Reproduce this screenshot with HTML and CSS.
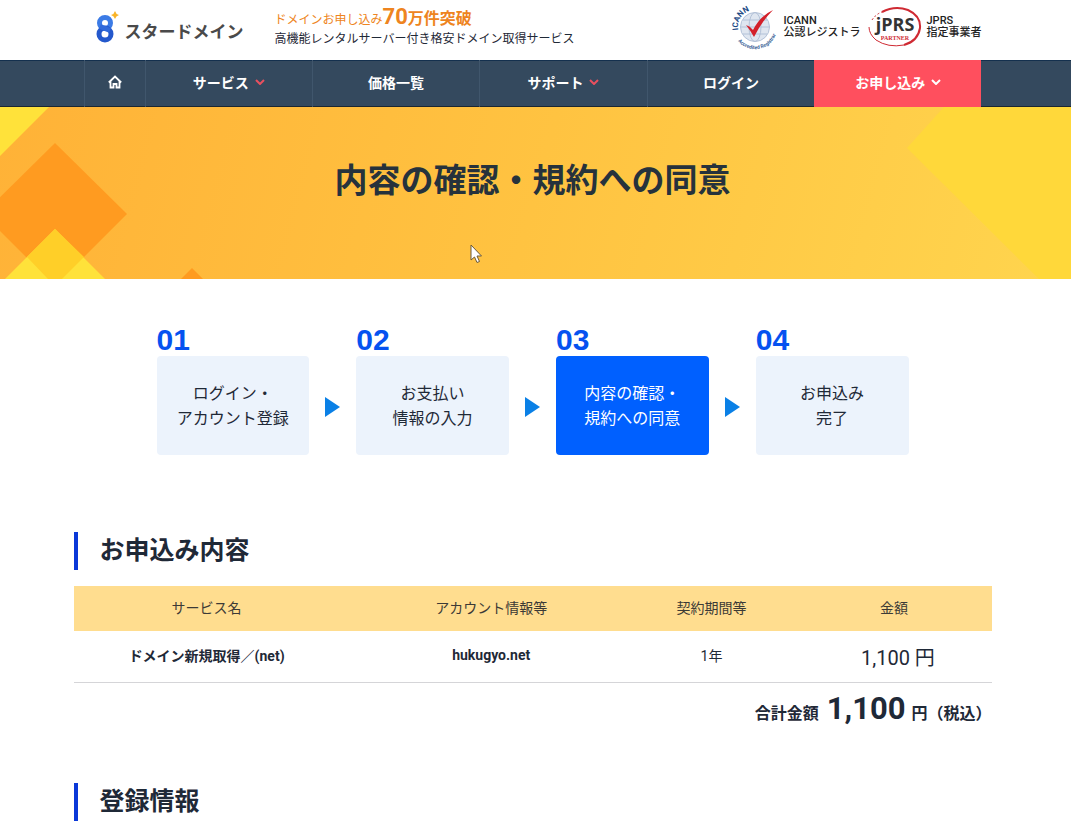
FILE: index.html
```html
<!DOCTYPE html>
<html lang="ja">
<head>
    <meta charset="UTF-8">
    <meta name="viewport" content="width=device-width, initial-scale=1.0">
    <title>内容の確認・規約への同意 | スタードメイン</title>
    <link rel="stylesheet" href="styles.css">
</head>
<body>

    <header class="header">
        <div class="header-inner">
            <a href="#" class="logo">
                <svg class="logo-mark" width="26" height="34" viewBox="0 0 26 34" aria-hidden="true">
                    <circle cx="10" cy="12" r="5.5" fill="none" stroke="#3b7be6" stroke-width="5"/>
                    <circle cx="10" cy="23" r="6" fill="none" stroke="#2458cc" stroke-width="5"/>
                    <path d="M5 15.5 L15 19.5" stroke="#3069da" stroke-width="5"/>
                    <path d="M20 0 Q20.8 3.2 24 4 Q20.8 4.8 20 8 Q19.2 4.8 16 4 Q19.2 3.2 20 0Z" fill="#f9b428"/>
                </svg>
                <span class="logo-text">スタードメイン</span>
            </a>
            <div class="catch">
                <p class="catch-main">ドメインお申し込み<strong class="catch-num">70</strong><strong class="catch-unit">万件突破</strong></p>
                <p class="catch-sub">高機能レンタルサーバー付き格安ドメイン取得サービス</p>
            </div>
            <div class="badges">
                <div class="badge">
                    <svg width="48" height="48" viewBox="0 0 48 48" aria-hidden="true">
                        <defs>
                            <path id="icannTop" d="M7.2 27 A17 17 0 0 1 35 11"/>
                            <path id="icannBottom" d="M7 38 A22 22 0 0 0 46 22"/>
                        </defs>
                        <circle cx="24" cy="24" r="14.5" fill="#dfe6f0"/>
                        <g fill="none" stroke="#b3c2d8">
                            <circle cx="24" cy="24" r="14.5"/>
                            <ellipse cx="24" cy="24" rx="6" ry="14.5"/>
                            <path d="M9.5 24H38.5M12 17H36M12 31H36"/>
                        </g>
                        <text class="icann-name"><textPath href="#icannTop">ICANN</textPath></text>
                        <text class="icann-note"><textPath href="#icannBottom">Accredited Registrar</textPath></text>
                        <path d="M15 22 Q19 23 22 27 Q29 13 42 7 Q31 18 23 34 Q19 27 15 22Z" fill="#d3202a"/>
                    </svg>
                    <p class="badge-text">ICANN<br>公認レジストラ</p>
                </div>
                <div class="badge">
                    <svg width="54" height="42" viewBox="0 0 54 42" aria-hidden="true">
                        <g fill="none" stroke="#cf2a33">
                            <path d="M14 6 Q27 -1 40 4 Q53 10 52 22 Q50 35 36 39" stroke-width="2"/>
                            <path d="M36 39 Q20 42 8 34 Q1 28 1 21" stroke-width="1"/>
                            <path d="M4 14 Q8 8 14 6" stroke-width="1" stroke-dasharray="2 2"/>
                        </g>
                        <text class="jprs-name" x="27" y="25" text-anchor="middle">jPRS</text>
                        <text class="jprs-note" x="27" y="34" text-anchor="middle">PARTNER</text>
                    </svg>
                    <p class="badge-text">JPRS<br>指定事業者</p>
                </div>
            </div>
        </div>
    </header>

    <nav class="nav">
        <ul class="nav-list">
            <li>
                <a href="#" aria-label="ホーム">
                    <svg width="14" height="14" viewBox="0 0 14 14" aria-hidden="true">
                        <path d="M0.8 7.5 L7 1.5 L13.2 7.5 M2.5 6.5 V12.5 H5.5 V9 H8.5 V12.5 H11.5 V6.5" fill="none" stroke="#fff" stroke-width="1.8"/>
                    </svg>
                </a>
            </li>
            <li>
                <a href="#">サービス
                    <svg class="chevron" width="10" height="6" viewBox="0 0 10 6" aria-hidden="true"><path d="M1 1 L5 5 L9 1"/></svg>
                </a>
            </li>
            <li><a href="#">価格一覧</a></li>
            <li>
                <a href="#">サポート
                    <svg class="chevron" width="10" height="6" viewBox="0 0 10 6" aria-hidden="true"><path d="M1 1 L5 5 L9 1"/></svg>
                </a>
            </li>
            <li><a href="#">ログイン</a></li>
            <li class="nav-apply">
                <a href="#">お申し込み
                    <svg class="chevron" width="10" height="6" viewBox="0 0 10 6" aria-hidden="true"><path d="M1 1 L5 5 L9 1"/></svg>
                </a>
            </li>
        </ul>
    </nav>

    <div class="hero">
        <svg class="hero-left" width="210" height="172" viewBox="0 0 210 172" aria-hidden="true">
            <path d="M0 0H49L0 49Z" fill="#ffe23a"/>
            <path d="M55 36L127 107L55 179L-17 107Z" fill="#ff9b20"/>
            <path d="M55 122L105 172H5Z" fill="#ffe23a"/>
            <path d="M55 122L84 150L62 172H48L27 150Z" fill="#ffcf28"/>
            <path d="M192 161L203 172H181Z" fill="#ff9b20"/>
        </svg>
        <svg class="hero-right" width="164" height="172" viewBox="0 0 164 172" aria-hidden="true">
            <path d="M37 0H164V172H132L0 41Z" fill="#ffd83a"/>
        </svg>
        <h1>内容の確認・規約への同意</h1>
        <svg class="cursor" width="14" height="20" viewBox="0 0 14 20" aria-hidden="true">
            <path d="M1 1V16L4.5 13L7 18.5L9.5 17.5L7 12H11.5Z" fill="#fff" stroke="#6b5a3a"/>
        </svg>
    </div>

    <main class="main">
        <ol class="steps">
            <li class="step">
                <span class="step-num">01</span>
                <p class="step-box">ログイン・<br>アカウント登録</p>
            </li>
            <li class="step">
                <span class="step-num">02</span>
                <p class="step-box">お支払い<br>情報の入力</p>
            </li>
            <li class="step current">
                <span class="step-num">03</span>
                <p class="step-box">内容の確認・<br>規約への同意</p>
            </li>
            <li class="step">
                <span class="step-num">04</span>
                <p class="step-box">お申込み<br>完了</p>
            </li>
        </ol>

        <section class="section">
            <h2>お申込み内容</h2>
            <table class="order">
                <thead>
                    <tr>
                        <th>サービス名</th>
                        <th>アカウント情報等</th>
                        <th>契約期間等</th>
                        <th>金額</th>
                    </tr>
                </thead>
                <tbody>
                    <tr>
                        <td class="strong">ドメイン新規取得／(net)</td>
                        <td class="strong">hukugyo.net</td>
                        <td>1年</td>
                        <td class="price">1,100 円</td>
                    </tr>
                </tbody>
            </table>
            <p class="total">合計金額 <span class="total-num">1,100</span> 円（税込）</p>
        </section>

        <section class="section">
            <h2>登録情報</h2>
        </section>
    </main>

</body>
</html>
```

FILE: styles.css
```css
* {
    box-sizing: border-box;
}

body {
    margin: 0;
    font-family: Roboto, "Noto Sans CJK JP", sans-serif;
    font-size: 14px;
    color: #1f2937;
    background-color: #fff;
}

h1, h2, p, ul, ol {
    margin: 0;
    padding: 0;
}

ul, ol {
    list-style: none;
}

a {
    color: inherit;
    text-decoration: none;
}

.header,
.nav,
.hero,
.main {
    padding-right: 6px;
}

/* header */
.header-inner {
    display: flex;
    align-items: center;
    max-width: 898px;
    height: 60px;
    margin: 0 auto;
    padding-left: 11px;
}

.logo {
    display: flex;
    align-items: center;
    gap: 4px;
    margin-right: 31px;
}

.logo-mark {
    margin-bottom: 4px;
}

.logo-text {
    font-size: 17px;
    font-weight: bold;
    color: #4a4a4a;
}

.catch {
    font-size: 12px;
    line-height: 16px;
    padding-bottom: 8px;
}

.catch-main {
    line-height: 22px;
    color: #ee8420;
}

.catch-num {
    font-size: 22px;
}

.catch-unit {
    font-size: 16px;
}

.badges {
    display: flex;
    gap: 7px;
    margin-left: auto;
    padding-bottom: 6px;
}

.badge {
    display: flex;
    align-items: center;
    gap: 5px;
}

.badge-text {
    font-size: 11px;
    font-weight: 500;
    line-height: 12px;
    color: #222;
}

.icann-name {
    font: bold 8px Roboto, sans-serif;
    fill: #1d4a85;
}

.icann-note {
    font: bold 5px Roboto, sans-serif;
    fill: #3a6296;
}

.jprs-name {
    font: bold 18px "Open Sans", sans-serif;
    fill: #333;
}

.jprs-note {
    font: bold 6px "Liberation Serif", serif;
    fill: #cf2a33;
}

/* nav */
.nav {
    background-color: #34495e;
    box-shadow: inset 0 1px #14304e, inset 0 -1px #1b2732;
}

.nav-list {
    display: grid;
    grid-template-columns: 61px repeat(5, 1fr);
    max-width: 898px;
    margin: 0 auto;
}

.nav-list li {
    border-left: 1px solid #40566c;
}

.nav-list a {
    display: flex;
    justify-content: center;
    align-items: center;
    gap: 6px;
    height: 47px;
    padding-bottom: 4px;
    font-weight: bold;
    color: #fff;
}

.chevron path {
    fill: none;
    stroke: #e8505f;
    stroke-width: 2;
}

.nav-list .nav-apply {
    background-color: #ff4f5e;
    border-left-color: #ff4f5e;
}

.nav-apply .chevron path {
    stroke: #fff;
}

/* hero */
.hero {
    position: relative;
    height: 172px;
    padding-top: 50px;
    background: linear-gradient(105deg, #ffb237, #ffc341 50%, #ffd54e);
    text-align: center;
}

.hero h1 {
    position: relative;
    font-size: 33px;
    line-height: 48px;
    color: #26323c;
}

.hero-left,
.hero-right {
    position: absolute;
    top: 0;
}

.hero-left {
    left: 0;
}

.hero-right {
    right: 0;
}

.cursor {
    position: absolute;
    top: 137px;
    left: 470px;
}

/* steps */
.steps {
    display: grid;
    grid-template-columns: repeat(4, 1fr);
    gap: 47px;
    max-width: 752px;
    margin: 0 auto;
    padding-top: 45px;
}

.step {
    position: relative;
}

.step-num {
    display: block;
    font-family: "Liberation Sans", Arial, sans-serif;
    font-size: 30px;
    font-weight: bold;
    line-height: 32px;
    color: #0552f0;
}

.step-box {
    padding: 25px 0 24px;
    border-radius: 4px;
    background-color: #ecf3fc;
    font-size: 16px;
    line-height: 25px;
    text-align: center;
}

.current .step-box {
    background-color: #0060ff;
    color: #fff;
}

/* arrow between two steps */
.step + .step::before {
    content: "";
    position: absolute;
    top: 73px;
    left: -31px;
    border: 10px solid transparent;
    border-left: 15px solid #0a80e6;
    border-right: 0;
}

/* sections */
.section {
    max-width: 918px;
    margin: 0 auto;
}

.steps + .section {
    padding-top: 77px;
}

.section + .section {
    padding-top: 47px;
    padding-bottom: 8px;
}

.section h2 {
    padding-left: 22px;
    border-left: 4px solid #0a38d8;
    font-size: 25px;
    font-weight: bold;
    line-height: 38px;
}

.order {
    width: 100%;
    margin-top: 16px;
    border-collapse: collapse;
    table-layout: fixed;
    text-align: center;
}

.order th {
    height: 45px;
    padding: 0 0 4px;
    background-color: #ffdd8f;
    font-weight: normal;
    color: #3c3a36;
}

.order th:nth-child(1) {
    width: 29%;
}

.order th:nth-child(2) {
    width: 33%;
}

.order th:nth-child(3) {
    width: 15%;
}

.order td {
    height: 51px;
    padding: 0 0 2px;
    border-bottom: 1px solid #d5d5d8;
}

.order th:last-child {
    padding-left: 16px;
}

.order .strong {
    font-weight: bold;
}

.order .price {
    padding: 0 0 0 24px;
    font-size: 20px;
}

.total {
    padding: 4px 0 0;
    font-size: 16px;
    font-weight: bold;
    line-height: 44px;
    text-align: right;
}

.total-num {
    margin: 0 2px 0 4px;
    font-size: 31px;
}
```
